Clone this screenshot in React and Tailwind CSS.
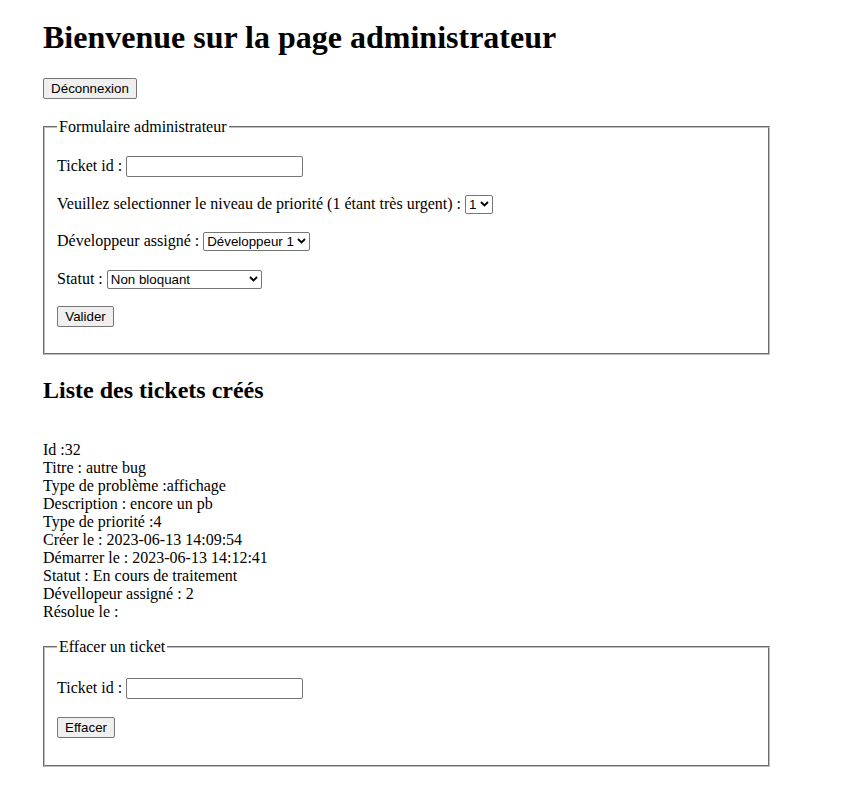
import { useState } from 'react'

// ── Ticket shown in the list ──────────────────────────────────────────────────
const TICKET_LINES = [
  'Id :32',
  'Titre : autre bug',
  'Type de problème :affichage',
  'Description : encore un pb',
  'Type de priorité :4',
  'Créer le : 2023-06-13 14:09:54',
  'Démarrer le : 2023-06-13 14:12:41',
  'Statut : En cours de traitement',
  'Dévellopeur assigné : 2',
  'Résolue le :',
]

const ctrlFont = "font-['Liberation_Sans',Arial,sans-serif] text-[13.33px] text-black"

function Chevron() {
  return (
    <svg width="9" height="6" viewBox="0 0 9 6" className="pointer-events-none absolute right-[4px] top-1/2 -translate-y-1/2">
      <polyline points="1,1 4.5,4.5 8,1" fill="none" stroke="#000" strokeWidth="1.8" />
    </svg>
  )
}

function Select({ width, options, value, onChange }) {
  return (
    <span className="relative inline-block">
      <select
        value={value}
        onChange={(e) => onChange(e.target.value)}
        className={[
          ctrlFont,
          'h-[19px] appearance-none rounded-[2px] border border-[#767676] bg-white pl-[3px] pr-[14px] leading-[15px]',
        ].join(' ')}
        style={{ width }}
      >
        {options.map((o) => (
          <option key={o}>{o}</option>
        ))}
      </select>
      <Chevron />
    </span>
  )
}

function TextInput() {
  return (
    <input
      type="text"
      className="h-[21px] w-[177px] rounded-[2px] border border-[#767676] bg-white px-[2px] text-[13.33px]"
    />
  )
}

function Button({ children, width }) {
  return (
    <button
      type="button"
      className={[
        ctrlFont,
        'h-[21px] rounded-[2px] border border-[#767676] bg-[#efefef] px-[6px] leading-[15px] hover:bg-[#e5e5e5]',
      ].join(' ')}
      style={{ width }}
    >
      {children}
    </button>
  )
}

export default function App() {
  const [priority, setPriority] = useState('1')
  const [dev, setDev] = useState('Développeur 1')
  const [statut, setStatut] = useState('Non bloquant')

  return (
    <div className="min-h-screen bg-white pl-[43px] font-['Liberation_Serif','Times_New_Roman',serif] text-[16px] text-black">
      {/* ── Header ─────────────────────────────────────────────────────── */}
      <h1 className="pt-[19px] text-[32px] font-bold leading-[37px]">Bienvenue sur la page administrateur</h1>

      <div className="mt-[20px]">
        <Button width="94px">Déconnexion</Button>
      </div>

      {/* ── Admin form ──────────────────────────────────────────────────── */}
      <fieldset className="mt-[18px] w-[727px] border-2 border-[#c0c0c0] px-[12px] pt-[19px] pb-[26px] [border-style:groove]">
        <legend className="px-[2px] leading-[18px]">Formulaire administrateur</legend>
        <div className="flex flex-col gap-[15.5px]">
          <div className="flex h-[22px] items-center">
            <span className="mr-[4px]">Ticket id :</span>
            <TextInput />
          </div>
          <div className="flex h-[22px] items-center">
            <span className="mr-[4px]">Veuillez selectionner le niveau de priorité (1 étant très urgent) :</span>
            <Select width="28px" options={['1', '2', '3', '4', '5']} value={priority} onChange={setPriority} />
          </div>
          <div className="flex h-[22px] items-center">
            <span className="mr-[4px]">Développeur assigné :</span>
            <Select
              width="107px"
              options={['Développeur 1', 'Développeur 2', 'Développeur 3']}
              value={dev}
              onChange={setDev}
            />
          </div>
          <div className="flex h-[22px] items-center">
            <span className="mr-[4px]">Statut :</span>
            <Select
              width="155px"
              options={['Non bloquant', 'Bloquant', 'En cours de traitement', 'Résolu']}
              value={statut}
              onChange={setStatut}
            />
          </div>
          <div className="flex h-[22px] items-center">
            <Button width="57px">Valider</Button>
          </div>
        </div>
      </fieldset>

      {/* ── Ticket list ─────────────────────────────────────────────────── */}
      <h2 className="mt-[21px] text-[24px] font-bold leading-[28px]">Liste des tickets créés</h2>

      <div className="mt-[37px] leading-[18px]">
        {TICKET_LINES.map((line) => (
          <div key={line}>{line}</div>
        ))}
      </div>

      {/* ── Delete form ─────────────────────────────────────────────────── */}
      <fieldset className="mt-[17px] w-[727px] border-2 border-[#c0c0c0] px-[12px] pt-[21px] pb-[27px] [border-style:groove]">
        <legend className="px-[2px] leading-[18px]">Effacer un ticket</legend>
        <div className="flex flex-col gap-[17px]">
          <div className="flex h-[22px] items-center">
            <span className="mr-[4px]">Ticket id :</span>
            <TextInput />
          </div>
          <div className="flex h-[22px] items-center">
            <Button width="58px">Effacer</Button>
          </div>
        </div>
      </fieldset>
    </div>
  )
}
